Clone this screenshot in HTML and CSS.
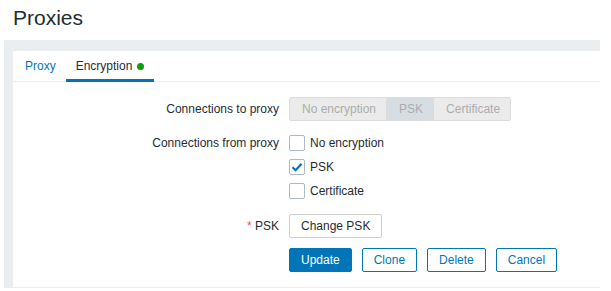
FILE: index.html
```html
<!DOCTYPE html>
<html>
<head>
<meta charset="utf-8">
<link rel="stylesheet" href="styles.css">
</head>
<body>
<header class="header"><h1 class="title">Proxies</h1></header>
<main class="wrapper">
  <section class="card">
    <ul class="tabs">
      <li class="tab"><a class="tab-link">Proxy</a></li>
      <li class="tab tab-active"><a class="tab-link">Encryption<span class="dot"></span></a></li>
    </ul>
    <form class="form">
      <div class="label">Connections to proxy</div>
      <div class="field">
        <ul class="segmented">
          <li class="seg">No encryption</li>
          <li class="seg seg-on">PSK</li>
          <li class="seg">Certificate</li>
        </ul>
      </div>

      <div class="label label-top">Connections from proxy</div>
      <div class="field">
        <ul class="checks">
          <li class="check"><span class="box"></span>No encryption</li>
          <li class="check"><span class="box"><svg viewBox="0 0 16 16" width="16" height="16"><path d="M3.5 8.2 L6.6 11.2 L12.6 4.8" fill="none" stroke="#0275b8" stroke-width="2.2"/></svg></span>PSK</li>
          <li class="check"><span class="box"></span>Certificate</li>
        </ul>
      </div>

      <div class="label"><span class="req">*</span> PSK</div>
      <div class="field"><button type="button" class="btn btn-grey">Change PSK</button></div>

      <div class="label"></div>
      <div class="field buttons">
        <button type="button" class="btn btn-main">Update</button>
        <button type="button" class="btn btn-alt">Clone</button>
        <button type="button" class="btn btn-alt">Delete</button>
        <button type="button" class="btn btn-alt">Cancel</button>
      </div>
    </form>
  </section>
</main>
</body>
</html>
```
FILE: styles.css
```css
* { box-sizing: border-box; }
body {
  margin: 0;
  font-family: "Liberation Sans", Arial, sans-serif;
  font-size: 12px;
  color: #1f2c33;
  background: #fff;
}
.header {
  height: 40px;
  padding: 6px 0 0 13px;
}
.title {
  margin: 0;
  font-size: 21px;
  font-weight: normal;
  line-height: 24px;
  color: #1f2c33;
}
.wrapper {
  margin-left: 4px;
  width: 596px;
  background: #ebeef0;
  padding: 11px 0 1px 9px;
}
.card {
  background: #fff;
}
.tabs {
  list-style: none;
  margin: 0;
  padding: 0 0 0 1px;
  display: flex;
  height: 31px;
  border-bottom: 1px solid #ebeef0;
}
.tab {
  height: 31px;
  padding: 8px 10px 6px;
  border-bottom: 3px solid transparent;
  line-height: 14px;
}
.tab:first-child { padding-left: 11px; }
.tab-link { color: #0275b8; display: flex; align-items: center; }
.tab-active { border-bottom-color: #0275b8; }
.tab-active .tab-link { color: #1f2c33; }
.dot {
  display: inline-block;
  width: 7px;
  height: 7px;
  border-radius: 50%;
  background: #0f9e0f;
  margin-left: 5px;
  margin-top: 1px;
}
.form {
  display: grid;
  grid-template-columns: 266px 1fr;
  column-gap: 10px;
  row-gap: 10px;
  padding: 15px 0 15px;
  align-items: center;
}
.label {
  text-align: right;
  line-height: 24px;
}
.label-top { align-self: start; }
.req { color: #e45959; }
.segmented {
  list-style: none;
  margin: 0;
  padding: 0;
  display: flex;
  height: 24px;
  border: 1px solid #dcdcdc;
  border-radius: 2px;
  width: max-content;
  background: #ebebeb;
}
.seg {
  padding: 0 10px 0 12px;
  line-height: 22px;
  color: #acacac;
}
.seg + .seg { border-left: 1px solid #dcdcdc; }
.seg-on { background: #d6dee3; }
.checks {
  list-style: none;
  margin: 0 0 1px;
  padding: 0;
}
.check {
  height: 24px;
  display: flex;
  align-items: center;
}
.box {
  width: 16px;
  height: 16px;
  border: 1px solid #acbbc2;
  border-radius: 2px;
  margin-right: 5px;
  position: relative;
  background: #fff;
}
.box svg { position: absolute; left: -1px; top: -1px; }
.btn {
  font-family: inherit;
  font-size: 12px;
  height: 24px;
  padding: 0 11px;
  border-radius: 2px;
  background: #fff;
  cursor: pointer;
  line-height: 22px;
}
.btn-grey { border: 1px solid #cfcfcf; color: #1f2c33; }
.btn-main { background: #0275b8; border: 1px solid #0275b8; color: #fff; }
.btn-alt { border: 1px solid #0275b8; color: #0275b8; }
.buttons { display: flex; gap: 10px; }
```
